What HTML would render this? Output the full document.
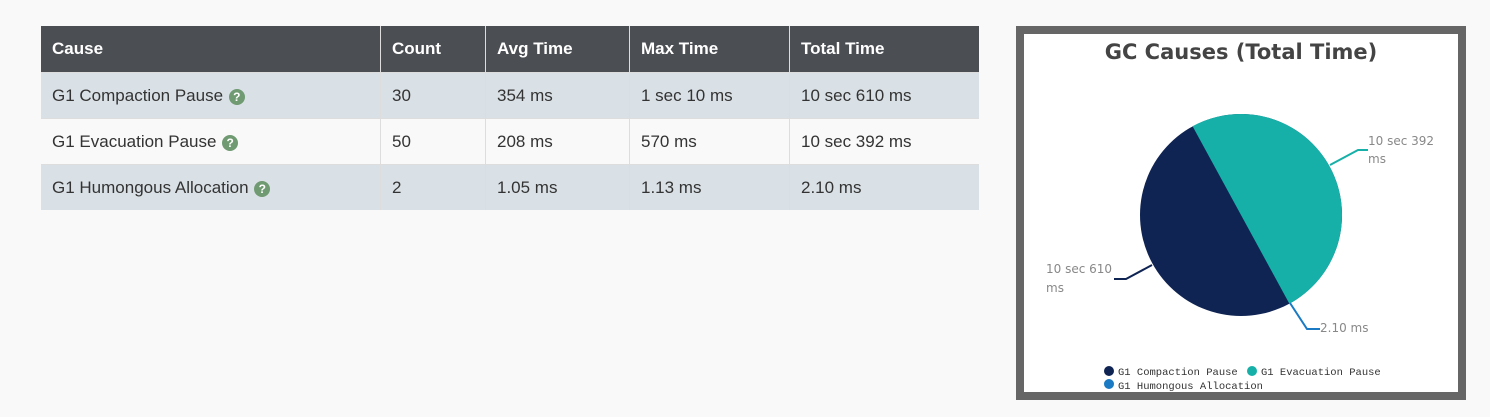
<!DOCTYPE html>
<html><head><style>
body{margin:0;width:1490px;height:417px;background:#f9f9f9;font-family:"Liberation Sans",sans-serif;position:relative;overflow:hidden}
table{position:absolute;left:41px;top:26px;border-collapse:collapse;width:938px;font-size:17px;color:#333}
th{background:#4b4e53;color:#fff;text-align:left;height:46px;padding:0 11px;font-weight:bold;border-right:1px solid #ddd}
td{height:45px;padding:0 11px;border-right:1px solid #ddd;border-top:1px solid #ddd}
tr.a td{background:#dae1e6}
tr.b td{background:#f9f9f9}
th:last-child,td:last-child{border-right:none}
.q{display:inline-block;width:16px;height:16px;border-radius:50%;background:#6f9a72;color:#fff;font-size:12px;font-weight:bold;text-align:center;line-height:16px;vertical-align:0px;margin-left:1px}
.box{position:absolute;left:1016px;top:26px;width:434px;height:358px;border:8px solid #666;background:#fff}
</style></head><body>
<table>
<tr><th style="width:317px">Cause</th><th style="width:82px">Count</th><th style="width:121px">Avg Time</th><th style="width:137px">Max Time</th><th>Total Time</th></tr>
<tr class="a"><td>G1 Compaction Pause <span class="q">?</span></td><td>30</td><td>354 ms</td><td>1 sec 10 ms</td><td>10 sec 610 ms</td></tr>
<tr class="b"><td>G1 Evacuation Pause <span class="q">?</span></td><td>50</td><td>208 ms</td><td>570 ms</td><td>10 sec 392 ms</td></tr>
<tr class="a"><td>G1 Humongous Allocation <span class="q">?</span></td><td>2</td><td>1.05 ms</td><td>1.13 ms</td><td>2.10 ms</td></tr>
</table>
<div class="box"></div>
<svg style="position:absolute;left:0;top:0" width="1490" height="417">
<text x="1241" y="59" text-anchor="middle" font-family="DejaVu Sans,sans-serif" font-size="21" font-weight="bold" fill="#444">GC Causes (Total Time)</text>
<circle cx="1241" cy="215" r="101" fill="#0f2453"/>
<path d="M1241,215 L1192.6,126.3 A101,101 0 0 1 1342,215 A101,101 0 0 1 1289.4,303.7 Z" fill="#17b0a8"/>
<path d="M1330,165 L1358,150 L1368,150" stroke="#17b0a8" stroke-width="2" fill="none"/>
<path d="M1152,265 L1126,279 L1114,279" stroke="#0f2453" stroke-width="2" fill="none"/>
<path d="M1290,303 L1307,329 L1320,329" stroke="#1a7ac4" stroke-width="2" fill="none"/>
<g font-family="DejaVu Sans,sans-serif" font-size="12" fill="#888">
<text x="1368" y="145">10 sec 392</text><text x="1368" y="163">ms</text>
<text x="1046" y="273">10 sec 610</text><text x="1046" y="292">ms</text>
<text x="1320" y="332">2.10 ms</text>
</g>
<circle cx="1109" cy="371" r="5" fill="#0f2453"/>
<circle cx="1252" cy="371" r="5" fill="#17b0a8"/>
<circle cx="1109" cy="384" r="5" fill="#1a7ac4"/>
<g font-family="Liberation Mono,monospace" font-size="10.5" fill="#333">
<text x="1118" y="375">G1 Compaction Pause</text>
<text x="1261" y="375">G1 Evacuation Pause</text>
<text x="1118" y="389">G1 Humongous Allocation</text>
</g>
</svg>
</body></html>
